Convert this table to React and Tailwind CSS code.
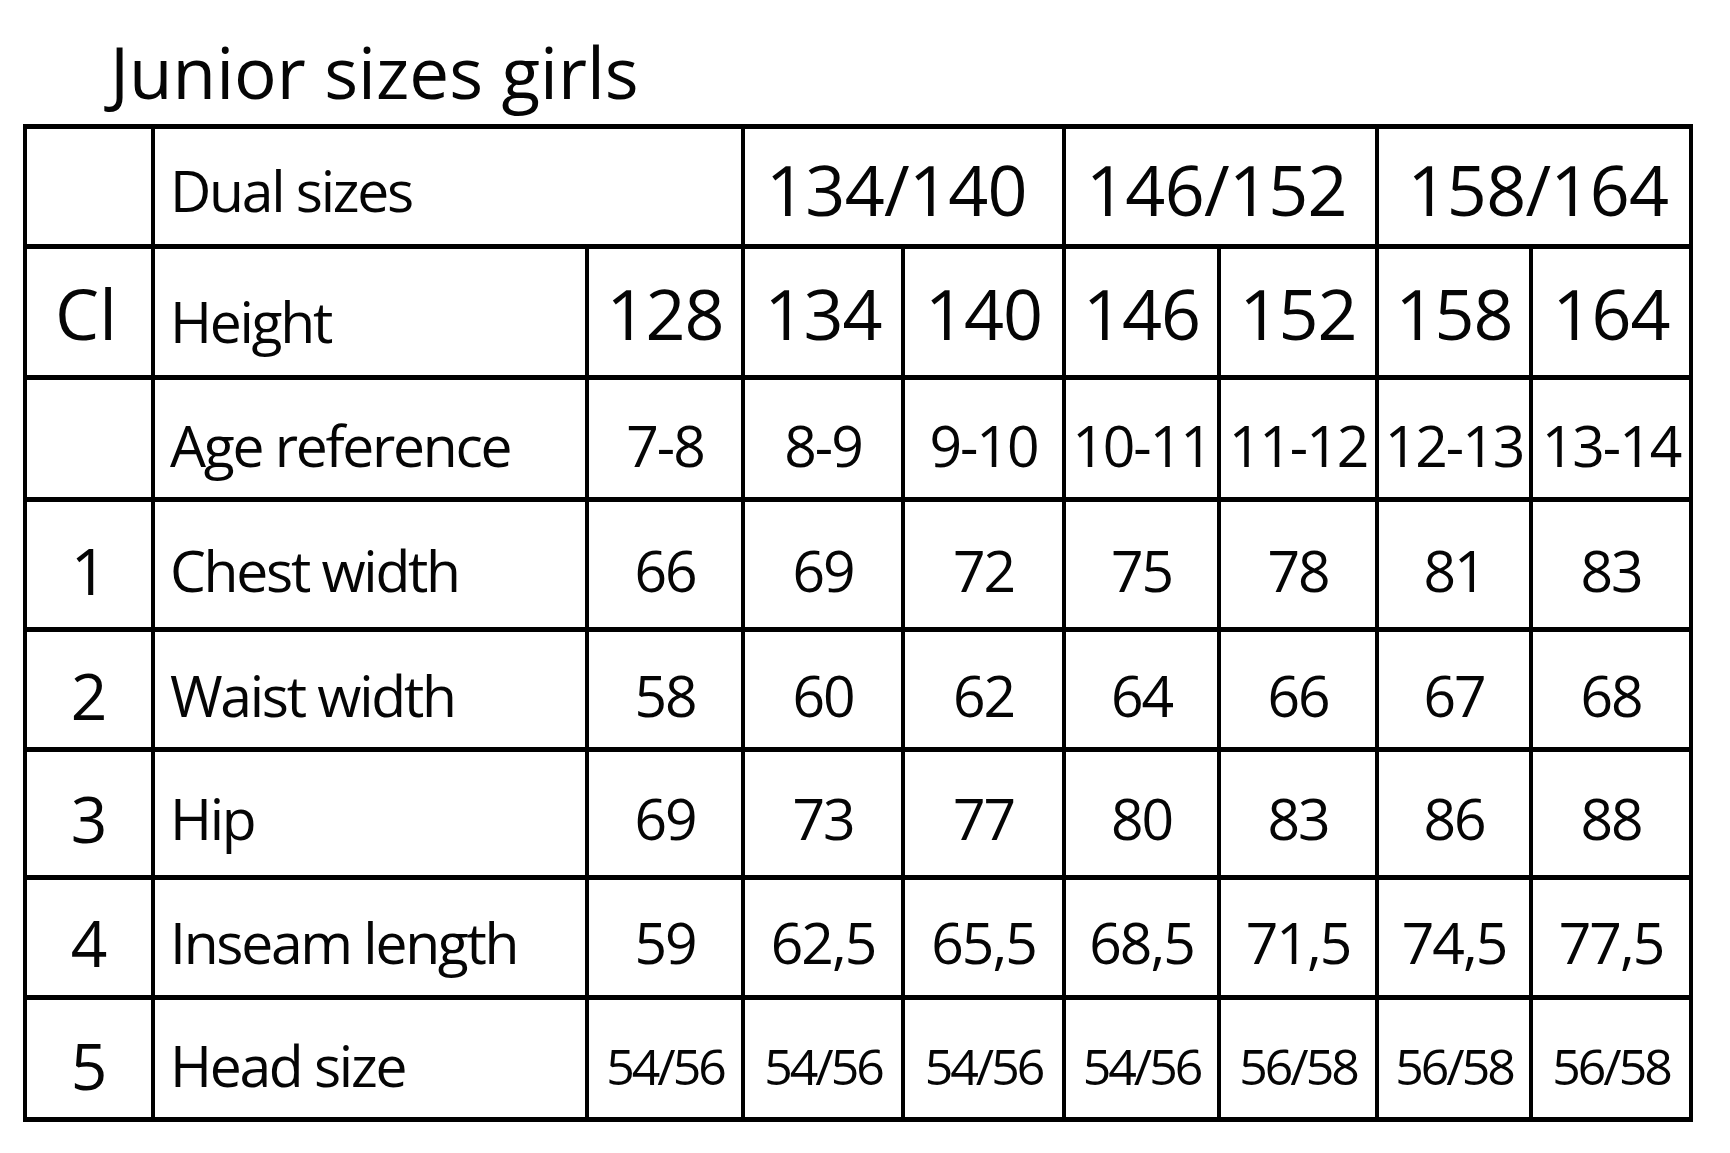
import React from "react";

const label = "justify-start pl-[15px] text-[57px] tracking-[-0.04em]";
const val = "justify-center text-[57px] tracking-[-0.035em]";

function Cell({ children, className = "" }) {
  return (
    <div className={`bg-white flex items-center whitespace-nowrap leading-none ${className}`}>
      {children}
    </div>
  );
}

const rowsData = [
  { num: "", label: "Age reference", vals: ["7-8", "8-9", "9-10", "10-11", "11-12", "12-13", "13-14"], vcls: "pt-[14px]" },
  { num: "1", label: "Chest width", vals: ["66", "69", "72", "75", "78", "81", "83"], vcls: "pt-[12px]" },
  { num: "2", label: "Waist width", vals: ["58", "60", "62", "64", "66", "67", "68"], vcls: "pt-[12px]" },
  { num: "3", label: "Hip", vals: ["69", "73", "77", "80", "83", "86", "88"], vcls: "pt-[10px]" },
  { num: "4", label: "Inseam length", vals: ["59", "62,5", "65,5", "68,5", "71,5", "74,5", "77,5"], vcls: "pt-[10px]" },
  { num: "5", label: "Head size", vals: ["54/56", "54/56", "54/56", "54/56", "56/58", "56/58", "56/58"], vcls: "pt-[14px]", small: true },
];

export default function App() {
  return (
    <div className="min-h-screen bg-white text-[#050505] font-['Open_Sans',sans-serif] font-medium pt-[37px] px-[23px]">
      <div className="pl-[87px] h-[70px] text-[71px] leading-[70px] font-normal whitespace-nowrap">
        Junior sizes girls
      </div>
      <div className="mt-[17px] w-fit grid grid-cols-[124px_430px_152px_156px_157px_151px_154px_150px_156px] grid-rows-[115px_126px_117px_125px_115px_123px_115px_117px] gap-x-[4px] gap-y-[5px] bg-black px-[4px] py-[5px]">
        {/* header row */}
        <Cell />
        <Cell className={`col-span-2 ${label} pt-[8px]`}>Dual sizes</Cell>
        <Cell className="col-span-2 justify-center text-[70px] font-normal tracking-[-0.01em] pt-[4px] pr-[14px]">134/140</Cell>
        <Cell className="col-span-2 justify-center text-[70px] font-normal tracking-[-0.01em] pt-[4px] pr-[8px]">146/152</Cell>
        <Cell className="col-span-2 justify-center text-[70px] font-normal tracking-[-0.01em] pt-[4px] pl-[8px]">158/164</Cell>

        {/* height row */}
        <Cell className="justify-center text-[70px] font-normal pt-[2px] pr-[6px]">Cl</Cell>
        <Cell className={`${label} pt-[18px]`}>Height</Cell>
        {["128", "134", "140", "146", "152", "158", "164"].map((v, i) => (
          <Cell key={i} className="justify-center text-[70px] font-normal tracking-[-0.015em] pt-[2px]">
            {v}
          </Cell>
        ))}

        {rowsData.map((r, ri) => (
          <React.Fragment key={ri}>
            <Cell className={`justify-center text-[64px] font-normal ${r.vcls}`}>{r.num}</Cell>
            <Cell className={`${label} ${r.vcls}`}>{r.label}</Cell>
            {r.vals.map((v, i) => (
              <Cell
                key={i}
                className={`${r.small ? "justify-center text-[50px] tracking-[-0.06em]" : val} ${r.vcls}`}
              >
                {v}
              </Cell>
            ))}
          </React.Fragment>
        ))}
      </div>
    </div>
  );
}
